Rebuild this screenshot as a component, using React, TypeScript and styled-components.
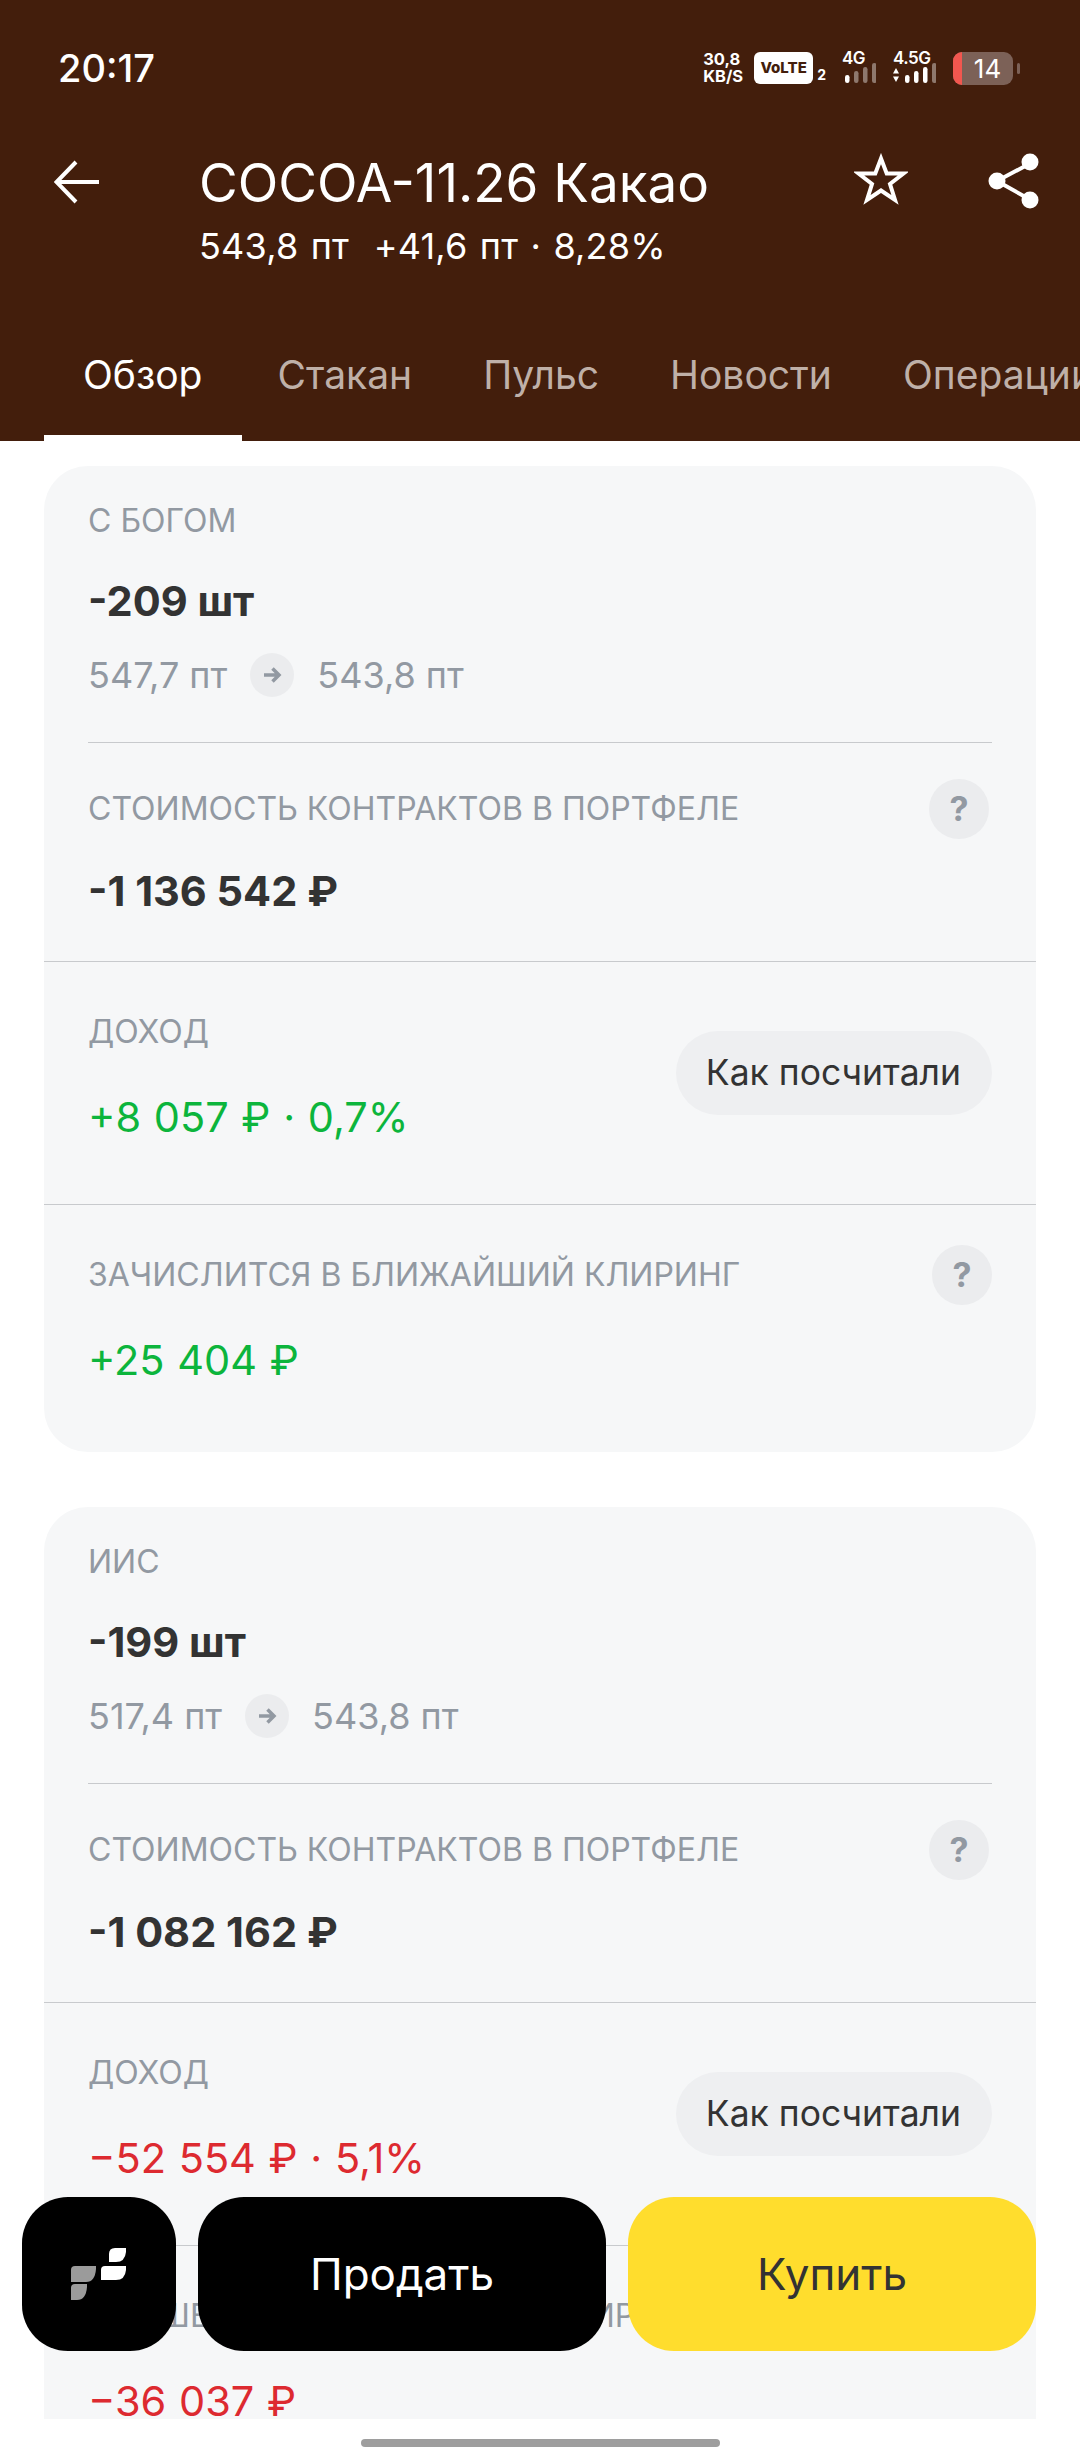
import React from 'react';
import styled, { createGlobalStyle } from 'styled-components';

const GlobalStyle = createGlobalStyle`
  html, body {
    margin: 0;
    padding: 0;
    background: #fff;
    font-family: Inter, "Noto Sans", sans-serif;
  }
  * { box-sizing: border-box; }
`;

type Tone = 'plain' | 'green' | 'red';

const positions = [
  {
    account: 'С БОГОМ',
    qty: '-209 шт',
    open: '547,7 пт',
    now: '543,8 пт',
    cost: '-1 136 542 ₽',
    income: '+8 057 ₽ · 0,7%',
    clearingLabel: 'ЗАЧИСЛИТСЯ В БЛИЖАЙШИЙ КЛИРИНГ',
    clearing: '+25 404 ₽',
    tone: 'green' as Tone,
  },
  {
    account: 'ИИС',
    qty: '-199 шт',
    open: '517,4 пт',
    now: '543,8 пт',
    cost: '-1 082 162 ₽',
    income: '−52 554 ₽ · 5,1%',
    clearingLabel: 'СПИШЕТСЯ В БЛИЖАЙШИЙ КЛИРИНГ',
    clearing: '−36 037 ₽',
    tone: 'red' as Tone,
  },
];

const tabs = ['Обзор', 'Стакан', 'Пульс', 'Новости', 'Операции'];

function Bars({ lit }: { lit: number }) {
  return (
    <svg width="31" height="20" viewBox="0 0 31 20">
      {[0, 1, 2, 3].map((i) => (
        <rect
          key={i}
          x={i * 9}
          y={12 - i * 4}
          width="4.5"
          height={8 + i * 4}
          rx="2.2"
          fill="#fff"
          opacity={i < lit ? 1 : 0.4}
        />
      ))}
    </svg>
  );
}

function StatusIcons() {
  return (
    <Icons>
      <Speed>
        <span>30,8</span>
        <span>KB/S</span>
      </Speed>
      <Volte>VoLTE</Volte>
      <SimNo>2</SimNo>
      <Net>
        <NetLabel>4G</NetLabel>
        <Bars lit={1} />
      </Net>
      <Net>
        <NetLabel>4.5G</NetLabel>
        <NetRow>
          <svg width="6" height="16" viewBox="0 0 6 16">
            <path d="M3 1 6 6.500H0ZM3 15 0 9.500H6Z" fill="#fff" />
          </svg>
          <Bars lit={3} />
        </NetRow>
      </Net>
      <Battery>
        <BatteryLevel />
        <BatteryText>14</BatteryText>
      </Battery>
      <BatteryNub />
    </Icons>
  );
}

function Position({ p }: { p: (typeof positions)[number] }) {
  return (
    <Card>
      <TopSection>
        <Label>{p.account}</Label>
        <BoldValue>{p.qty}</BoldValue>
        <Prices>
          <span>{p.open}</span>
          <ArrowDot>
            <svg width="20" height="18" viewBox="0 0 20 18" fill="none">
              <path d="M2 9h15M10.500 2.500 17 9l-6.500 6.500" stroke="#9299a2" strokeWidth="3.500" />
            </svg>
          </ArrowDot>
          <span>{p.now}</span>
        </Prices>
      </TopSection>
      <CostSection>
        <LabelRow>
          <Label>СТОИМОСТЬ КОНТРАКТОВ В ПОРТФЕЛЕ</Label>
          <Help $inset={3}>?</Help>
        </LabelRow>
        <BoldValue $tight>{p.cost}</BoldValue>
      </CostSection>
      <IncomeSection>
        <div>
          <Label>ДОХОД</Label>
          <ToneValue $tone={p.tone} $top={41}>{p.income}</ToneValue>
        </div>
        <PillButton>Как посчитали</PillButton>
      </IncomeSection>
      <ClearingSection>
        <LabelRow>
          <Label>{p.clearingLabel}</Label>
          <Help $inset={0}>?</Help>
        </LabelRow>
        <ToneValue $tone={p.tone} $top={31}>{p.clearing}</ToneValue>
      </ClearingSection>
    </Card>
  );
}

export default function App() {
  return (
    <Page>
      <GlobalStyle />
      <Header>
        <StatusBar>
          <Clock>20:17</Clock>
          <StatusIcons />
        </StatusBar>
        <TitleBar>
          <BackButton>
            <svg width="46" height="44" viewBox="0 0 46 44" fill="none">
              <path d="M45 22H3M22 2 2.500 22 22 42" stroke="#fff" strokeWidth="4" />
            </svg>
          </BackButton>
          <TitleBlock>
            <Title>COCOA-11.26 Какао</Title>
            <Subtitle>543,8 пт&nbsp; +41,6 пт · 8,28%</Subtitle>
          </TitleBlock>
          <Actions>
            <svg width="54" height="52" viewBox="0 0 54 52" fill="none">
              <path
                d="M27 5.500 32.700 20.500 49.500 20.500 36 31 41 47 27 37.500 13 47 18 31 4.500 20.500 21.300 20.500Z"
                stroke="#fff"
                strokeWidth="4"
              />
            </svg>
            <svg width="52" height="56" viewBox="0 0 52 56" fill="none">
              <path d="M41 11 9 28 41 46" stroke="#fff" strokeWidth="4" />
              <circle cx="42" cy="9" r="8.500" fill="#fff" />
              <circle cx="9" cy="28" r="8.500" fill="#fff" />
              <circle cx="42" cy="47" r="8.500" fill="#fff" />
            </svg>
          </Actions>
        </TitleBar>
        <Tabs>
          {tabs.map((t, i) => (
            <Tab key={t} $active={i === 0}>{t}</Tab>
          ))}
        </Tabs>
      </Header>
      <Content>
        {positions.map((p) => (
          <Position key={p.account} p={p} />
        ))}
      </Content>
      <TradeBar>
        <LogoButton>
          <svg width="56" height="52" viewBox="0 0 56 52">
            <path d="M4 18h21v3q-1 13-10 13H0v-12q0-4 4-4Z" fill="#9b9b9b" />
            <path d="M4 36h12v3q-1 13-10 13H0v-12q0-4 4-4Z" fill="#9b9b9b" />
            <path d="M44 0h11v4q-1 10-10 10h-7V6q0-6 6-6Z" fill="#fff" />
            <path d="M34 18h21v4q-1 10-10 10H30V22q0-4 4-4Z" fill="#fff" />
          </svg>
        </LogoButton>
        <SellButton>Продать</SellButton>
        <BuyButton>Купить</BuyButton>
      </TradeBar>
      <NavArea>
        <HomeBar />
      </NavArea>
    </Page>
  );
}

const Page = styled.div`
  position: relative;
  width: 1080px;
  height: 2460px;
  display: flex;
  flex-direction: column;
  overflow: hidden;
  background: #fff;
`;
const Header = styled.header`
  height: 441px;
  flex: none;
  background: #431e0c;
  color: #fff;
  display: flex;
  flex-direction: column;
`;
const StatusBar = styled.div`
  height: 68px;
  margin-top: 34px;
  padding: 0 60px 0 58px;
  display: flex;
  align-items: center;
  justify-content: space-between;
`;
const Clock = styled.div`
  font-size: 38px;
  font-weight: 500;
  height: 68px;
  line-height: 68px;
`;
const Icons = styled.div`
  display: flex;
  align-items: center;
  height: 34px;
`;
const Speed = styled.div`
  display: flex;
  flex-direction: column;
  font-size: 16.500px;
  line-height: 17px;
  font-weight: 700;
  margin-right: 11px;
`;
const Volte = styled.div`
  width: 59px;
  height: 32px;
  border-radius: 6px;
  background: #fff;
  color: #431e0c;
  font-size: 15px;
  font-weight: 800;
  line-height: 32px;
  text-align: center;
`;
const SimNo = styled.div`
  font-size: 14px;
  font-weight: 700;
  margin: 12px 16px 0 4px;
`;
const Net = styled.div`
  display: flex;
  flex-direction: column;
  align-items: flex-end;
  min-width: 34px;
  height: 34px;
  margin-right: 17px;
  svg {
    display: block;
    flex: none;
  }
`;
const NetLabel = styled.div`
  align-self: flex-start;
  font-size: 17px;
  font-weight: 600;
  line-height: 14px;
  height: 12px;
  letter-spacing: -0.5px;
`;
const NetRow = styled.div`
  display: flex;
  align-items: flex-end;
  gap: 6px;
`;
const Battery = styled.div`
  position: relative;
  width: 60px;
  height: 33px;
  border-radius: 9px;
  background: #7c6157;
  overflow: hidden;
  display: flex;
  align-items: center;
  justify-content: center;
  padding-left: 9px;
`;
const BatteryLevel = styled.div`
  position: absolute;
  left: 0;
  top: 0;
  bottom: 0;
  width: 9px;
  background: #f2574f;
`;
const BatteryText = styled.span`
  font-size: 26px;
  font-weight: 400;
`;
const BatteryNub = styled.div`
  width: 3px;
  height: 11px;
  border-radius: 2px;
  margin-left: 4px;
  background: #7c6157;
`;
const TitleBar = styled.div`
  display: flex;
  align-items: flex-start;
  margin-top: 47px;
  padding: 0 40px 0 54px;
`;
const BackButton = styled.div`
  width: 145px;
  flex: none;
  padding-top: 11px;
  svg {
    display: block;
  }
`;
const TitleBlock = styled.div`
  flex: 1;
`;
const Title = styled.div`
  font-size: 53px;
  line-height: 68px;
  white-space: nowrap;
`;
const Subtitle = styled.div`
  margin-top: 4px;
  font-size: 36px;
  line-height: 50px;
  word-spacing: 2px;
  letter-spacing: 0.2px;
  white-space: nowrap;
`;
const Actions = styled.div`
  display: flex;
  align-items: flex-start;
  gap: 80px;
  margin-top: 4px;
  svg {
    display: block;
    flex: none;
  }
`;
const Tabs = styled.nav`
  margin-top: auto;
  display: flex;
  height: 98px;
  padding-left: 44px;
  overflow: hidden;
`;
const Tab = styled.div<{ $active?: boolean }>`
  flex: none;
  padding: ${(p) => (p.$active ? '0 0 0 39px' : '0 35.500px')};
  width: ${(p) => (p.$active ? '198px' : 'auto')};
  height: 98px;
  line-height: 64px;
  font-size: 39px;
  color: ${(p) => (p.$active ? '#fff' : '#bfb0a8')};
  border-bottom: 6px solid ${(p) => (p.$active ? '#fff' : 'transparent')};
`;
const Content = styled.main`
  flex: 1;
  min-height: 0;
  overflow: hidden;
  padding: 25px 44px 0;
  display: flex;
  flex-direction: column;
  gap: 55px;
`;
const Card = styled.section`
  flex: none;
  background: #f6f7f8;
  border-radius: 44px;
`;
const TopSection = styled.div`
  margin: 0 44px;
  padding: 35px 0 45px;
  border-bottom: 1px solid #c8cacd;
`;
const Label = styled.div`
  font-size: 32px;
  line-height: 40px;
  color: #9299a2;
  white-space: nowrap;
`;
const BoldValue = styled.div<{ $tight?: boolean }>`
  margin-top: ${(p) => (p.$tight ? '28px' : '36px')};
  font-size: 41.500px;
  line-height: 48px;
  font-weight: 700;
  color: #333;
  white-space: nowrap;
`;
const Prices = styled.div`
  margin-top: 28px;
  display: flex;
  align-items: center;
  gap: 23px;
  height: 44px;
  font-size: 36px;
  color: #9299a2;
`;
const ArrowDot = styled.div`
  width: 44px;
  height: 44px;
  border-radius: 50%;
  background: #ebecee;
  display: flex;
  align-items: center;
  justify-content: center;
`;
const CostSection = styled.div`
  padding: 36px 44px 46px;
  border-bottom: 1px solid #c8cacd;
`;
const LabelRow = styled.div`
  display: flex;
  align-items: center;
  justify-content: space-between;
  height: 60px;
`;
const Help = styled.div<{ $inset: number }>`
  width: 60px;
  height: 60px;
  margin-right: ${(p) => p.$inset}px;
  border-radius: 50%;
  background: #ebecee;
  color: #9299a2;
  font-size: 34px;
  font-weight: 700;
  line-height: 60px;
  text-align: center;
`;
const IncomeSection = styled.div`
  padding: 50px 44px 63px;
  border-bottom: 1px solid #c8cacd;
  display: flex;
  justify-content: space-between;
  align-items: flex-start;
`;
const ToneValue = styled.div<{ $tone: Tone; $top: number }>`
  margin-top: ${(p) => p.$top}px;
  font-size: 41.500px;
  line-height: 48px;
  word-spacing: 1px;
  white-space: nowrap;
  color: ${(p) => (p.$tone === 'green' ? '#0cb53c' : p.$tone === 'red' ? '#dd2a30' : '#333')};
`;
const PillButton = styled.div`
  margin-top: 19px;
  height: 84px;
  padding: 0 31px 0 30px;
  border-radius: 42px;
  background: #eeeff1;
  color: #333;
  font-size: 35.500px;
  line-height: 84px;
  white-space: nowrap;
`;
const ClearingSection = styled.div`
  padding: 40px 44px 68px;
`;
const TradeBar = styled.div`
  position: absolute;
  left: 22px;
  top: 2197px;
  display: flex;
  gap: 22px;
`;
const TradeButton = styled.div`
  height: 154px;
  border-radius: 46px;
  display: flex;
  align-items: center;
  justify-content: center;
  font-size: 44px;
`;
const LogoButton = styled(TradeButton)`
  width: 154px;
  background: #000;
`;
const SellButton = styled(TradeButton)`
  width: 408px;
  background: #000;
  color: #fff;
`;
const BuyButton = styled(TradeButton)`
  width: 408px;
  background: #ffdd2d;
  color: #333;
`;
const NavArea = styled.div`
  height: 41px;
  flex: none;
  background: #fff;
  position: relative;
  display: flex;
  justify-content: center;
  padding-top: 20px;
`;
const HomeBar = styled.div`
  width: 359px;
  height: 8px;
  border-radius: 4px;
  background: #9e9e9e;
`;
